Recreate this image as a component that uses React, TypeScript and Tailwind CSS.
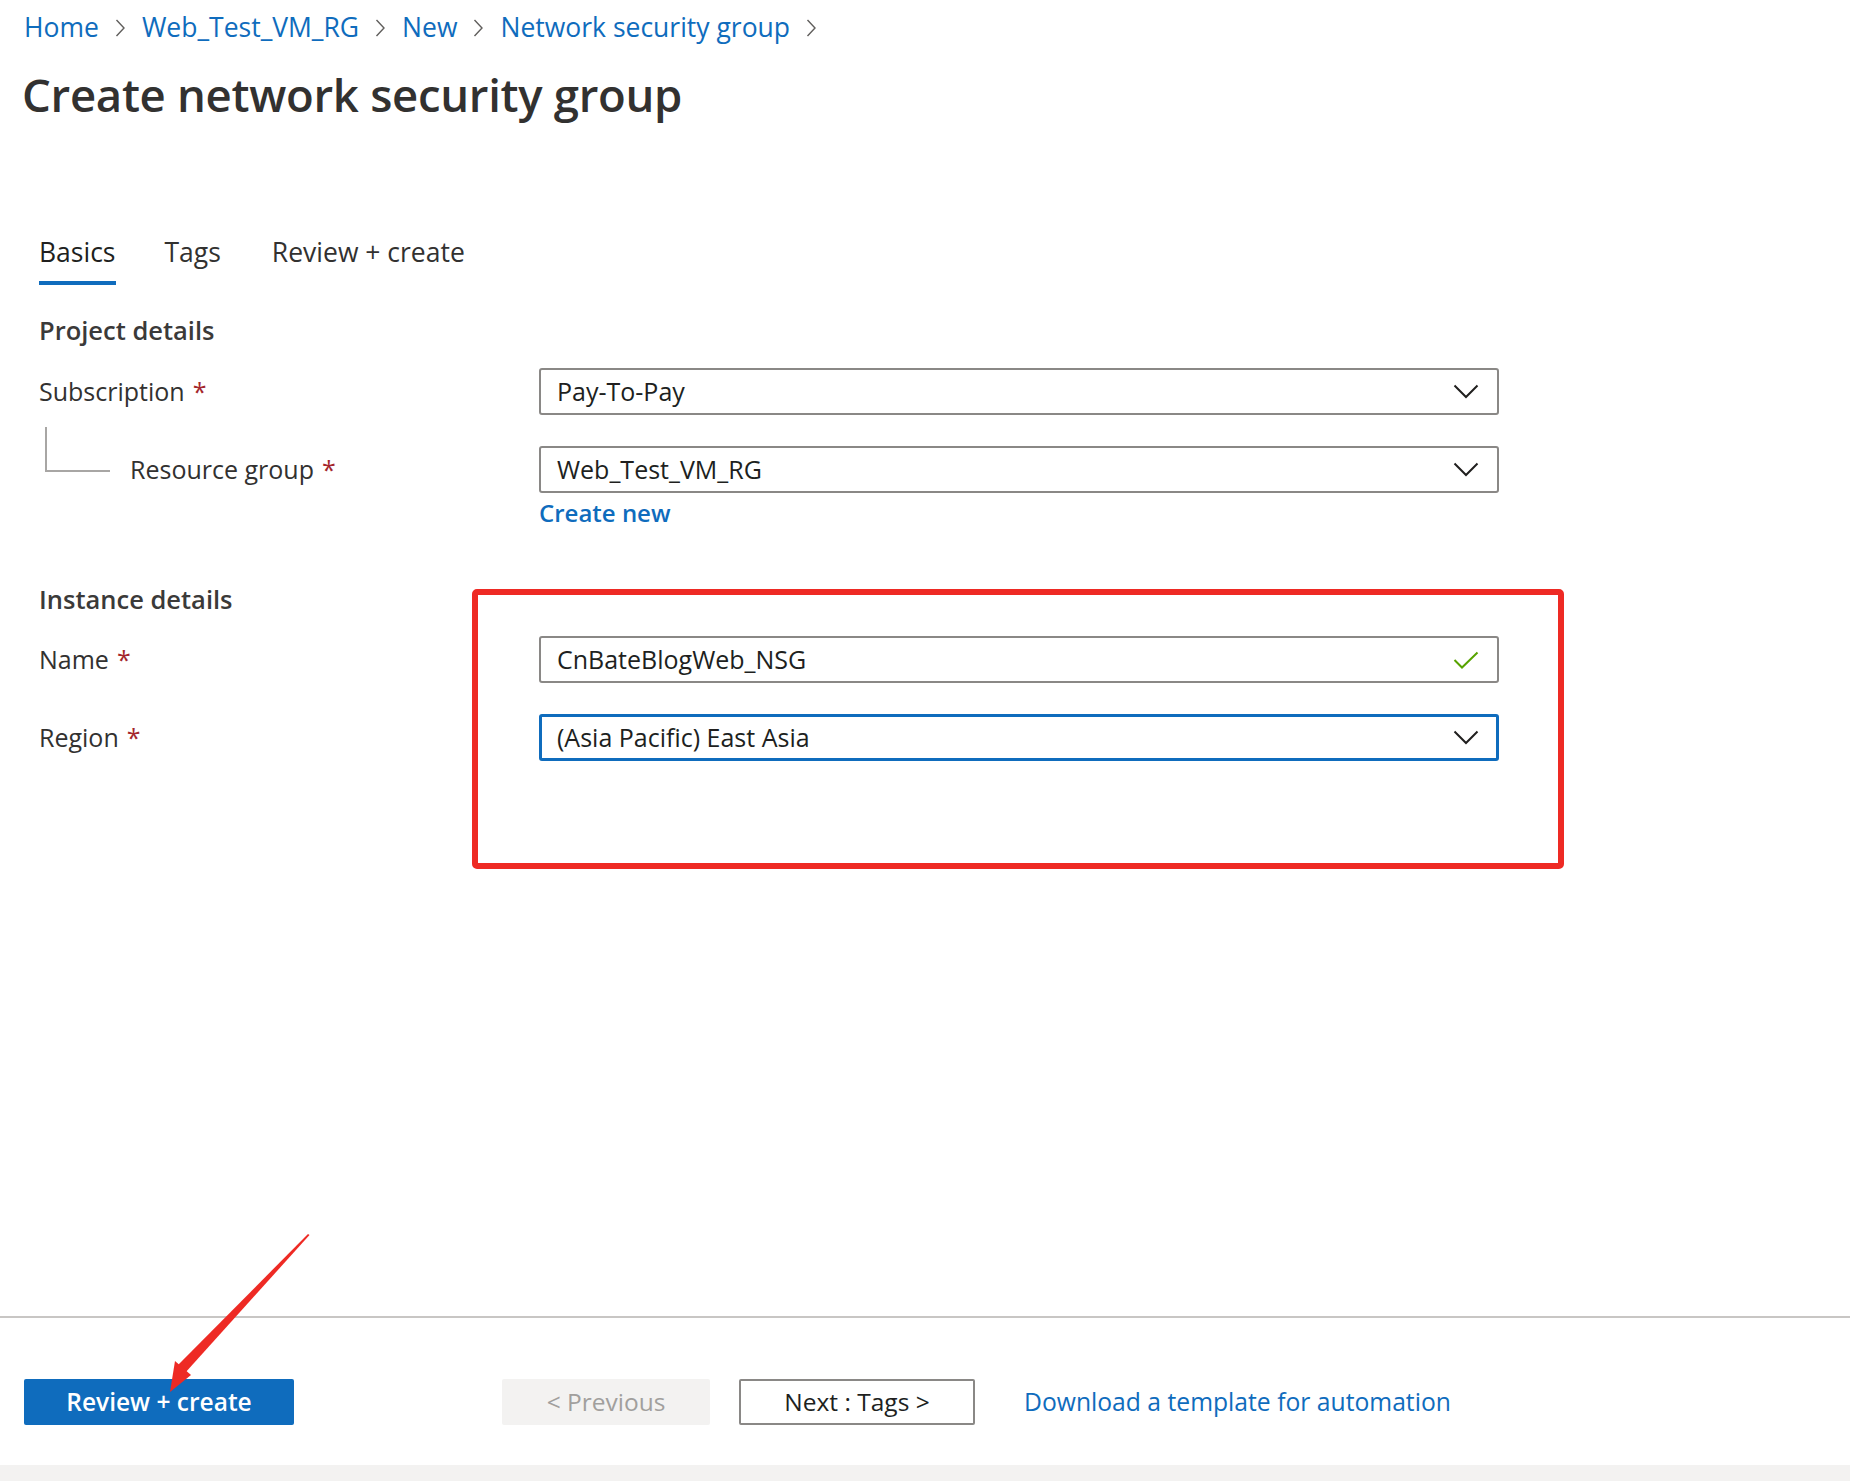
import { ReactNode } from "react";

const Crumb = ({ label }: { label: string }) => (
  <>
    <span className="text-[#0f6cbd]">{label}</span>
    <svg className="mx-[16px] shrink-0" width="11" height="20" viewBox="0 0 11 20">
      <polyline points="1.5,2 9,10 1.5,18" fill="none" stroke="#605e5c" strokeWidth="1.4" />
    </svg>
  </>
);

const Chevron = () => (
  <svg width="26" height="15" viewBox="0 0 26 15" className="shrink-0">
    <polyline points="1.5,1.5 13,13 24.5,1.5" fill="none" stroke="#201f1e" strokeWidth="2" />
  </svg>
);

const Required = () => <span className="ml-[8px] text-[#a4262c]">*</span>;

const Field = ({
  value,
  focused,
  icon,
}: {
  value: string;
  focused?: boolean;
  icon: ReactNode;
}) => (
  <div
    className={
      focused
        ? "flex h-[47px] w-[960px] items-center justify-between rounded-[3px] border-[3px] border-[#0f6cbd] pl-[15px] pr-[17px]"
        : "flex h-[47px] w-[960px] items-center justify-between rounded-[3px] border-2 border-[#8a8886] pl-[16px] pr-[18px]"
    }
  >
    <span className="text-[25px] text-[#201f1e]">{value}</span>
    {icon}
  </div>
);

const Row = ({ label, children }: { label: ReactNode; children: ReactNode }) => (
  <div className="flex items-center">
    <div className="flex w-[500px] items-center text-[25px] text-[#323130]">{label}</div>
    {children}
  </div>
);

export default function App() {
  return (
    <div className="relative flex h-[1481px] w-[1850px] flex-col overflow-hidden bg-white font-['Open_Sans',sans-serif] text-[#323130]">
      {/* breadcrumb + title */}
      <nav className="flex h-[56px] items-center pl-[24px] text-[26.5px]">
        <Crumb label="Home" />
        <Crumb label="Web_Test_VM_RG" />
        <Crumb label="New" />
        <Crumb label="Network security group" />
      </nav>
      <h1 className="flex h-[76px] items-center pl-[22px] text-[45.5px] font-semibold tracking-[-0.3px] text-[#323130]">
        Create network security group
      </h1>

      {/* tabs */}
      <div className="mt-[102px] flex pl-[39px] text-[26.5px]">
        <div className="flex flex-col">
          <span className="h-[36px] leading-[36px] text-[#201f1e]">Basics</span>
          <span className="mt-[11px] h-[4px] bg-[#0f6cbd]" />
        </div>
        <span className="ml-[49px] h-[36px] leading-[36px]">Tags</span>
        <span className="ml-[51px] h-[36px] leading-[36px]">Review + create</span>
      </div>

      {/* form */}
      <div className="flex flex-col pl-[39px]">
        <div className="mt-[25px] flex h-[40px] items-center text-[25.5px] font-semibold text-[#3b3a39]">
          Project details
        </div>

        <div className="mt-[18px]">
          <Row
            label={
              <>
                Subscription
                <Required />
              </>
            }
          >
            <Field value="Pay-To-Pay" icon={<Chevron />} />
          </Row>
        </div>

        <div className="mt-[31px]">
          <Row
            label={
              <div className="flex items-start">
                <div className="ml-[6px] -mt-[24px] h-[45px] w-[65px] border-b-2 border-l-2 border-[#a8a6a4]" />
                <span className="ml-[20px]">Resource group</span>
                <Required />
              </div>
            }
          >
            <Field value="Web_Test_VM_RG" icon={<Chevron />} />
          </Row>
        </div>

        <div className="ml-[500px] mt-[2px] flex h-[36px] items-center text-[24px] font-semibold text-[#0f6cbd]">
          Create new
        </div>

        <div className="mt-[48px] flex h-[40px] items-center text-[25.5px] font-semibold text-[#3b3a39]">
          Instance details
        </div>

        <div className="mt-[17px]">
          <Row
            label={
              <>
                Name
                <Required />
              </>
            }
          >
            <Field
              value="CnBateBlogWeb_NSG"
              icon={
                <svg width="26" height="18" viewBox="0 0 26 18" className="shrink-0">
                  <polyline points="1.5,9 9,16.5 24.5,1.5" fill="none" stroke="#57a300" strokeWidth="2" />
                </svg>
              }
            />
          </Row>
        </div>

        <div className="mt-[31px]">
          <Row
            label={
              <>
                Region
                <Required />
              </>
            }
          >
            <Field value="(Asia Pacific) East Asia" focused icon={<Chevron />} />
          </Row>
        </div>
      </div>

      {/* footer */}
      <div className="mt-auto flex h-[149px] items-start border-t-2 border-[#c8c6c4] pl-[24px] pt-[61px]">
        <button className="h-[46px] w-[270px] rounded-[2px] bg-[#0f6cbd] text-[24.5px] font-semibold text-white">
          Review + create
        </button>
        <button className="ml-[208px] h-[46px] w-[208px] rounded-[2px] bg-[#f3f2f1] text-[24.5px] text-[#a19f9d]">
          &lt; Previous
        </button>
        <button className="ml-[29px] h-[46px] w-[236px] rounded-[2px] border-2 border-[#8a8886] text-[24.5px] text-[#201f1e]">
          Next : Tags &gt;
        </button>
        <span className="ml-[49px] flex h-[46px] items-center text-[24.7px] text-[#0f6cbd]">
          Download a template for automation
        </span>
      </div>
      <div className="h-[16px] bg-[#f3f2f1]" />

      {/* annotation: red box */}
      <div className="pointer-events-none absolute left-[472px] top-[589px] h-[280px] w-[1092px] rounded-[5px] border-[6px] border-[#ee2a24]" />

      {/* annotation: red arrow */}
      <svg
        className="pointer-events-none absolute left-0 top-0"
        width="1850"
        height="1481"
        viewBox="0 0 1850 1481"
      >
        <polygon points="308,1234 309.5,1235 185,1373 177,1366" fill="#ee2a24" />
        <polygon points="170,1392 175,1361 191,1375" fill="#ee2a24" />
      </svg>
    </div>
  );
}
